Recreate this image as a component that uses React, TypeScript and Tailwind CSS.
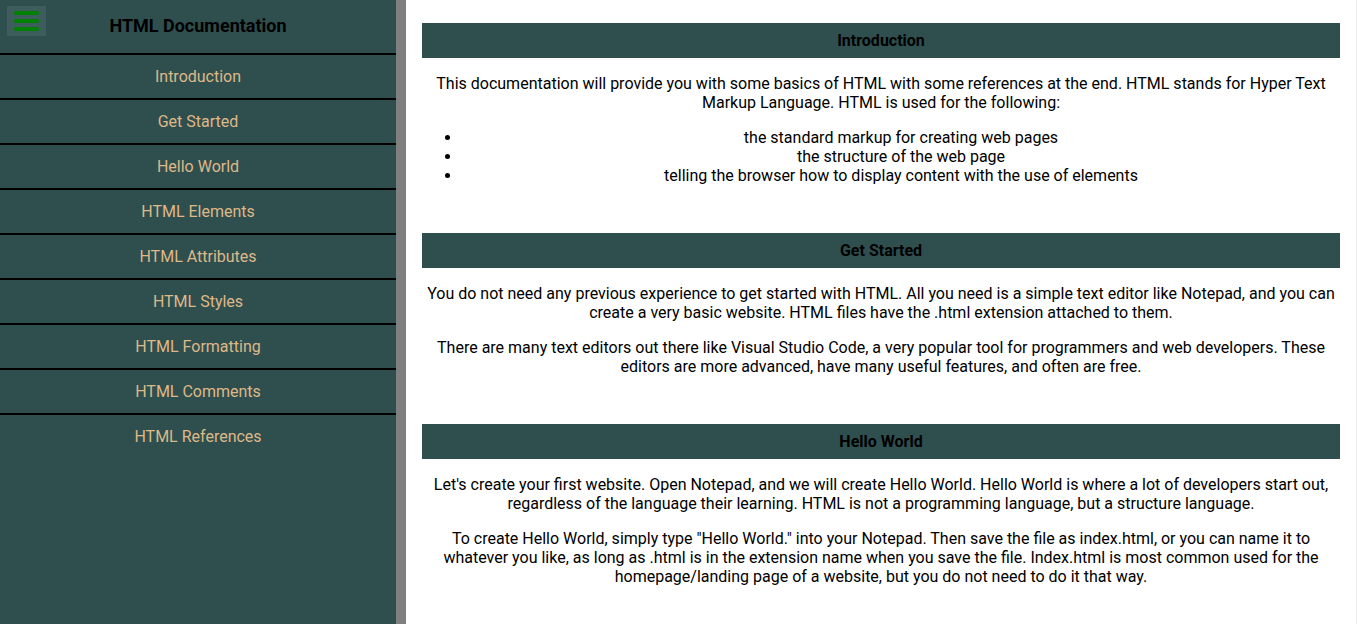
const links = [
  "Introduction",
  "Get Started",
  "Hello World",
  "HTML Elements",
  "HTML Attributes",
  "HTML Styles",
  "HTML Formatting",
  "HTML Comments",
  "HTML References",
];

function SectionHeader({ title }: { title: string }) {
  return (
    <header className="h-[35px] bg-[#2f4f4f] flex items-center justify-center text-[16px] font-bold text-black">
      {title}
    </header>
  );
}

export default function App() {
  return (
    <div className="flex h-screen overflow-hidden bg-white text-black" style={{ fontFamily: "Roboto, 'Noto Sans', sans-serif" }}>
      <nav className="w-[406px] shrink-0 bg-[#2f4f4f] border-r-[10px] border-[#808080]">
        <div className="relative h-[53px] flex items-center justify-center">
          <button className="absolute left-[7px] top-[6px] w-[39px] h-[30px] bg-[#3d5c5c] flex flex-col items-center justify-center gap-[4px]">
            <span className="block w-[25px] h-[4px] rounded-full bg-[#008000]"></span>
            <span className="block w-[25px] h-[4px] rounded-full bg-[#008000]"></span>
            <span className="block w-[25px] h-[4px] rounded-full bg-[#008000]"></span>
          </button>
          <h1 className="text-[18px] font-bold mt-[-3px]">HTML Documentation</h1>
        </div>
        <ul>
          {links.map((l) => (
            <li key={l} className="h-[45px] border-t-2 border-black flex items-center justify-center text-[16px] text-[#deb887]">
              {l}
            </li>
          ))}
        </ul>
      </nav>

      <main className="flex-1 px-4 pt-[23px] text-[16px] leading-[19px] text-center border-r border-[#eeeeee]">
        <section className="mb-12">
          <SectionHeader title="Introduction" />
          <p className="my-4">
            This documentation will provide you with some basics of HTML with some references at the end. HTML stands for Hyper Text Markup Language. HTML is used for the following:
          </p>
          <ul className="list-disc pl-10 my-4">
            <li>the standard markup for creating web pages</li>
            <li>the structure of the web page</li>
            <li>telling the browser how to display content with the use of elements</li>
          </ul>
        </section>

        <section className="mb-12">
          <SectionHeader title="Get Started" />
          <p className="my-4">
            You do not need any previous experience to get started with HTML. All you need is a simple text editor like Notepad, and you can create a very basic website. HTML files have the .html extension attached to them.
          </p>
          <p className="my-4">
            There are many text editors out there like Visual Studio Code, a very popular tool for programmers and web developers. These editors are more advanced, have many useful features, and often are free.
          </p>
        </section>

        <section className="mb-12">
          <SectionHeader title="Hello World" />
          <p className="my-4">
            Let's create your first website. Open Notepad, and we will create Hello World. Hello World is where a lot of developers start out, regardless of the language their learning. HTML is not a programming language, but a structure language.
          </p>
          <p className="my-4">
            To create Hello World, simply type "Hello World." into your Notepad. Then save the file as index.html, or you can name it to whatever you like, as long as .html is in the extension name when you save the file. Index.html is most common used for the homepage/landing page of a website, but you do not need to do it that way.
          </p>
        </section>
      </main>
    </div>
  );
}
